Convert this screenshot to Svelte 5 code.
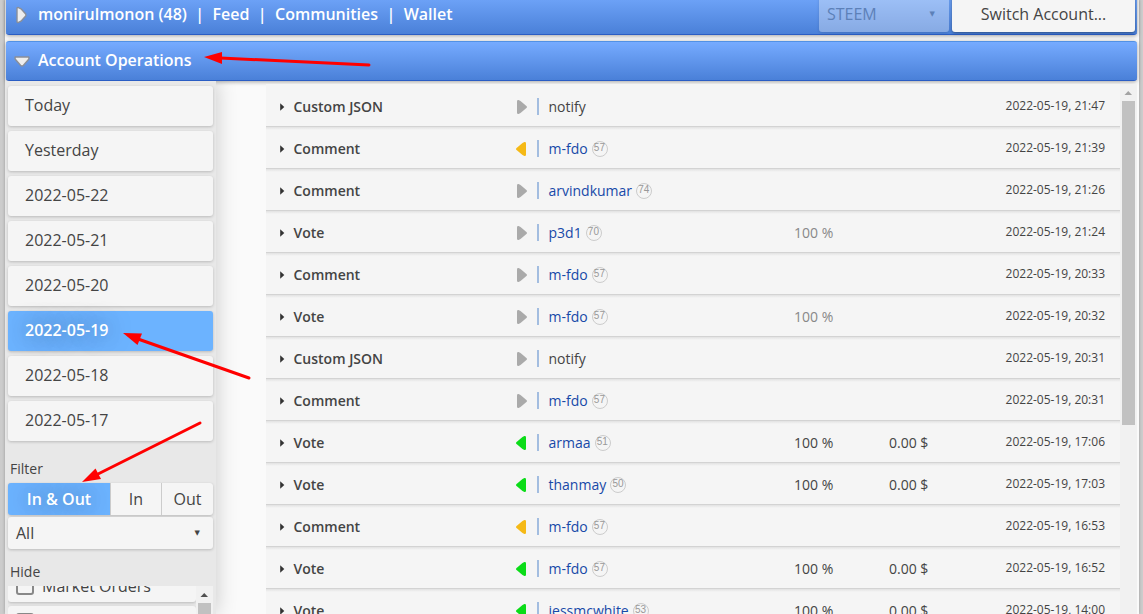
<script>
  const days = ['Today', 'Yesterday', '2022-05-22', '2022-05-21', '2022-05-20', '2022-05-19', '2022-05-18', '2022-05-17'];
  const directions = ['In & Out', 'In', 'Out'];

  let selectedDay = $state('2022-05-19');
  let direction = $state('In & Out');

  // dir: out = own action, comment / vote = incoming
  const operations = [
    { type: 'Custom JSON', dir: 'out', name: 'notify', time: '21:47' },
    { type: 'Comment', dir: 'comment', name: 'm-fdo', rep: 57, time: '21:39' },
    { type: 'Comment', dir: 'out', name: 'arvindkumar', rep: 74, time: '21:26' },
    { type: 'Vote', dir: 'out', name: 'p3d1', rep: 70, weight: '100 %', time: '21:24' },
    { type: 'Comment', dir: 'out', name: 'm-fdo', rep: 57, time: '20:33' },
    { type: 'Vote', dir: 'out', name: 'm-fdo', rep: 57, weight: '100 %', time: '20:32' },
    { type: 'Custom JSON', dir: 'out', name: 'notify', time: '20:31' },
    { type: 'Comment', dir: 'out', name: 'm-fdo', rep: 57, time: '20:31' },
    { type: 'Vote', dir: 'vote', name: 'armaa', rep: 51, weight: '100 %', value: '0.00 $', time: '17:06' },
    { type: 'Vote', dir: 'vote', name: 'thanmay', rep: 50, weight: '100 %', value: '0.00 $', time: '17:03' },
    { type: 'Comment', dir: 'comment', name: 'm-fdo', rep: 57, time: '16:53' },
    { type: 'Vote', dir: 'vote', name: 'm-fdo', rep: 57, weight: '100 %', value: '0.00 $', time: '16:52' },
    { type: 'Vote', dir: 'vote', name: 'jessmcwhite', rep: 53, weight: '100 %', value: '0.00 $', time: '14:00' }
  ];
</script>

<div class="page">
  <div class="panel">
    <header class="bar account-bar">
      <svg class="toggle" width="16" height="18" viewBox="0 0 16 18">
        <path d="M3 2.5 Q3 1.3 4.5 1.6 L7 2.8 L11.7 8 Q12.2 9 11.700 10 L7 15.2 L4.5 16.4 Q3 16.7 3 15.5 Z" fill="#eee" stroke="#8a8f99" stroke-width="1.4" />
      </svg>
      <nav>
        <span>monirulmonon (48)</span><i>|</i><span>Feed</span><i>|</i><span>Communities</span><i>|</i><span>Wallet</span>
      </nav>
      <div class="chain">STEEM <span class="caret">▼</span></div>
      <button class="switch">Switch Account...</button>
    </header>

    <header class="bar section-bar">
      <svg class="toggle" width="16" height="18" viewBox="0 0 16 18">
        <path d="M1.500 5 H14.5 Q15.5 5.5 14.5 7.5 L9.5 13.3 Q8 14.8 6.5 13.3 L1.5 7.5 Q.5 5.5 1.5 5 Z" fill="#eee" stroke="#8a8f99" stroke-width="1.4" />
      </svg>
      <span>Account Operations</span>
    </header>

    <div class="content">
      <aside class="sidebar">
        <div class="days">
          {#each days as day}
            <button class="day" class:selected={day === selectedDay} onclick={() => (selectedDay = day)}><span>{day}</span></button>
          {/each}
        </div>

        <div class="label filter-label">Filter</div>
        <div class="directions">
          {#each directions as d}
            <button class:selected={d === direction} onclick={() => (direction = d)}><span>{d}</span></button>
          {/each}
        </div>
        <div class="select">All <span class="caret">▼</span></div>

        <div class="label hide-label">Hide</div>
        <div class="hide-list">
          <div class="hide-items">
            <div class="hide-item"><span class="checkbox"></span>Market Orders</div>
            <div class="hide-item"><span class="checkbox"></span></div>
          </div>
          <div class="scrollbar small">
            <svg width="17" height="17" viewBox="0 0 17 17"><path d="M4.5 11 H12 L8.25 7 Z" fill="#505050" /></svg>
            <div class="thumb"></div>
          </div>
        </div>
      </aside>

      <main class="operations">
        {#each operations as op}
          <div class="row">
            <svg class="expand" width="5" height="8" viewBox="0 0 5 8"><path d="M0.2 0.3 L4.3 4 L0.2 7.7 Z" fill="#333" /></svg>
            <span class="type">{op.type}</span>
            <svg class="arrow {op.dir}" width="12" height="16" viewBox="0 0 12 16">
              <path d="M1 2.2 Q1 .8 2.6 1 L4.5 2 L10.7 7.2 Q11.3 8 10.7 8.8 L4.5 14 L2.6 15 Q1 15.2 1 13.8 Z" />
            </svg>
            <span class="who">
              {#if op.rep}
                <a href="#{op.name}">{op.name}</a><span class="rep">{op.rep}</span>
              {:else}
                <span>{op.name}</span>
              {/if}
            </span>
            <span class="weight" class:own={op.dir === 'out'}>{op.weight ?? ''}</span>
            <span class="value">{op.value ?? ''}</span>
            <time>2022-05-19, {op.time}</time>
          </div>
        {/each}
      </main>

      <div class="scrollbar">
        <svg width="17" height="17" viewBox="0 0 17 17"><path d="M4.5 11 H12 L8.25 7 Z" fill="#a3a3a3" /></svg>
        <div class="thumb"></div>
      </div>
    </div>
  </div>

  <!-- hand-drawn pointers over the page -->
  <svg class="pointers" width="1143" height="614" viewBox="0 0 1143 614">
    <g stroke="#f00" stroke-width="3" stroke-linecap="round">
      <path d="M369 65 L220 58" />
      <path d="M249 378 L138 339" />
      <path d="M200 423 L98 474" />
    </g>
    <g fill="#f00">
      <path d="M204 57 L222 52 L222 64 Z" />
      <path d="M123 333 L142 333.5 L137.500 345 Z" />
      <path d="M82 482 L95.500 468.500 L101 479 Z" />
    </g>
  </svg>
</div>

<style>
  :global(body) {
    margin: 0;
    overflow: hidden;
  }

  .page {
    position: relative;
    box-sizing: border-box;
    height: 614px;
    padding: 0 4px;
    overflow: hidden;
    background: #ccc;
    font-family: 'Open Sans', sans-serif;
    font-size: 14px;
    color: #444;
  }

  .panel {
    display: flex;
    flex-direction: column;
    height: 614px;
    margin-left: 1px;
    box-sizing: border-box;
    padding: 0 2px 0 1px;
    background: #fafafa;
    box-shadow: 0 0 3px rgba(0, 0, 0, 0.25);
  }

  button {
    border: 0;
    padding: 0;
    font: inherit;
    color: inherit;
    background: #f5f5f5;
  }

  .bar {
    display: flex;
    align-items: center;
    flex: none;
    box-sizing: border-box;
    height: 40px;
    padding-left: 8px;
    border-top: 1px solid #5291e4;
    border-bottom: 1px solid #2a5dc4;
    border-radius: 3px;
    background: linear-gradient(#76abff, #4a80d8);
    box-shadow: 0 1px 4px rgba(0, 0, 0, 0.35);
    font-size: 16px;
    font-weight: 600;
    color: #fff;
  }

  .bar span {
    padding-bottom: 2px;
  }

  .account-bar {
    height: 46px;
    margin-top: -11px;
    padding-right: 2px;
  }

  .section-bar {
    margin-top: 6px;
  }

  .toggle {
    margin-right: 8px;
  }

  .account-bar .toggle {
    margin-top: 6px;
  }

  nav {
    flex: 1;
    margin-top: 4px;
    white-space: nowrap;
  }

  nav i {
    margin: 0 8.4px;
    font-style: normal;
  }

  .chain,
  .switch {
    box-sizing: border-box;
    height: 38px;
    margin-top: 2px;
    border-radius: 3px;
    font-weight: 400;
    line-height: 40px;
  }

  .chain {
    display: flex;
    justify-content: space-between;
    width: 130px;
    margin-right: 3px;
    padding: 0 14px 0 8px;
    background: rgba(245, 245, 245, 0.35);
    color: #5c80b8;
    box-shadow: 0 1px 3px rgba(0, 0, 0, 0.12);
  }

  .caret {
    font-family: 'DejaVu Sans', sans-serif;
    font-size: 7px;
  }

  .switch {
    width: 183px;
    box-shadow: 0 1px 3px rgba(0, 0, 0, 0.4);
    color: #444;
  }

  .content {
    display: flex;
    flex: 1;
    min-height: 0;
  }

  .sidebar {
    display: flex;
    flex-direction: column;
    flex: none;
    box-sizing: border-box;
    width: 211px;
    margin-left: -1px;
    padding: 5px 3px 0;
    background: #e8e8e8;
    box-shadow: 0 0 20px rgba(0, 0, 0, 0.2);
    clip-path: inset(0 -40px 0 0);
  }

  .days {
    display: flex;
    flex-direction: column;
    gap: 5px;
  }

  .day {
    height: 40px;
    padding: 0 17px 2px;
    border-radius: 3px;
    box-shadow: 0 1px 3px rgba(0, 0, 0, 0.2);
    font-size: 16px;
    text-align: left;
  }

  .selected {
    background: #6cb3ff;
    color: #fff;
    font-weight: 600;
    text-shadow: 0 0 22px rgba(0, 0, 0, 0.5);
  }

  .label {
    padding-left: 2px;
    line-height: 20px;
  }

  .filter-label {
    margin: 18px 0 4px;
  }

  .directions {
    display: grid;
    grid-template-columns: 102px 50px 51px;
    gap: 1px;
    height: 32px;
    font-size: 16px;
    border-radius: 3px;
    background: #ccc;
    box-shadow: 0 1px 3px rgba(0, 0, 0, 0.2);
    overflow: hidden;
  }

  .select {
    display: flex;
    justify-content: space-between;
    height: 32px;
    margin-top: 2px;
    padding: 0 13px 0 8px;
    border-radius: 3px;
    background: #f5f5f5;
    box-shadow: 0 1px 3px rgba(0, 0, 0, 0.2);
    font-size: 16px;
    line-height: 33px;
  }

  .hide-label {
    margin: 13px 0 4px;
  }

  .hide-list {
    display: flex;
    flex: 1;
    min-height: 0;
    overflow: hidden;
  }

  .hide-items {
    display: flex;
    flex-direction: column;
    gap: 4px;
    width: 188px;
    margin-top: -16px;
  }

  .hide-item {
    display: flex;
    align-items: center;
    flex: none;
    height: 32px;
    padding-left: 8px;
    border-radius: 3px;
    background: #f5f5f5;
    box-shadow: 0 1px 3px rgba(0, 0, 0, 0.2);
    font-size: 16px;
  }

  .checkbox {
    box-sizing: border-box;
    width: 18px;
    height: 18px;
    margin-right: 8px;
    border: 2px solid #888;
    border-radius: 3px;
  }

  .operations {
    flex: none;
    width: 854px;
    margin-left: 50px;
    padding-top: 3px;
  }

  .row {
    display: flex;
    align-items: center;
    height: 42px;
    padding: 2px 15px 0 14px;
    box-sizing: border-box;
    background: linear-gradient(#e2e2e2, #f5f5f5 3px);
    border-bottom: 1px solid #d3d3d3;
  }

  .row:first-child {
    background: #f5f5f5;
    height: 43px;
    padding-top: 3px;
  }

  .expand {
    margin-right: 8.5px;
  }

  .type {
    width: 222px;
    font-weight: 600;
  }

  .arrow {
    margin-top: 1px;
    margin-right: 9.5px;
    fill: #aaa;
  }

  .arrow.comment {
    fill: #f5b916;
    transform: translateX(-1px) scaleX(-1);
  }

  .arrow.vote {
    fill: #0bdc18;
    transform: translateX(-1px) scaleX(-1);
  }

  .who {
    display: flex;
    align-items: center;
    width: 245.500px;
    height: 17px;
    padding-left: 9.5px;
    border-left: 2px solid #a3bde0;
  }

  .who a {
    color: #1749a8;
    text-decoration: none;
  }

  .rep {
    box-sizing: border-box;
    width: 16px;
    height: 16px;
    margin-left: 4px;
    border: 1px solid #ccc;
    border-radius: 50%;
    font-family: 'Liberation Sans', sans-serif;
    font-size: 10px;
    line-height: 12px;
    text-align: center;
    text-indent: -0.5px;
    color: #999;
  }

  .weight {
    width: 95px;
  }

  .weight.own {
    color: #888;
  }

  .value {
    flex: 1;
  }

  time {
    font-size: 12px;
    margin-top: -3px;
  }

  .scrollbar {
    display: flex;
    flex-direction: column;
    align-items: center;
    width: 17px;
    margin-top: 3px;
    background: #f1f1f1;
  }

  .thumb {
    width: 13px;
    height: 324px;
    background: #c1c1c1;
  }

  .small {
    margin-top: 0;
  }

  .small .thumb {
    flex: 1;
  }

  .pointers {
    position: absolute;
    top: 0;
    left: 0;
    pointer-events: none;
  }
</style>
